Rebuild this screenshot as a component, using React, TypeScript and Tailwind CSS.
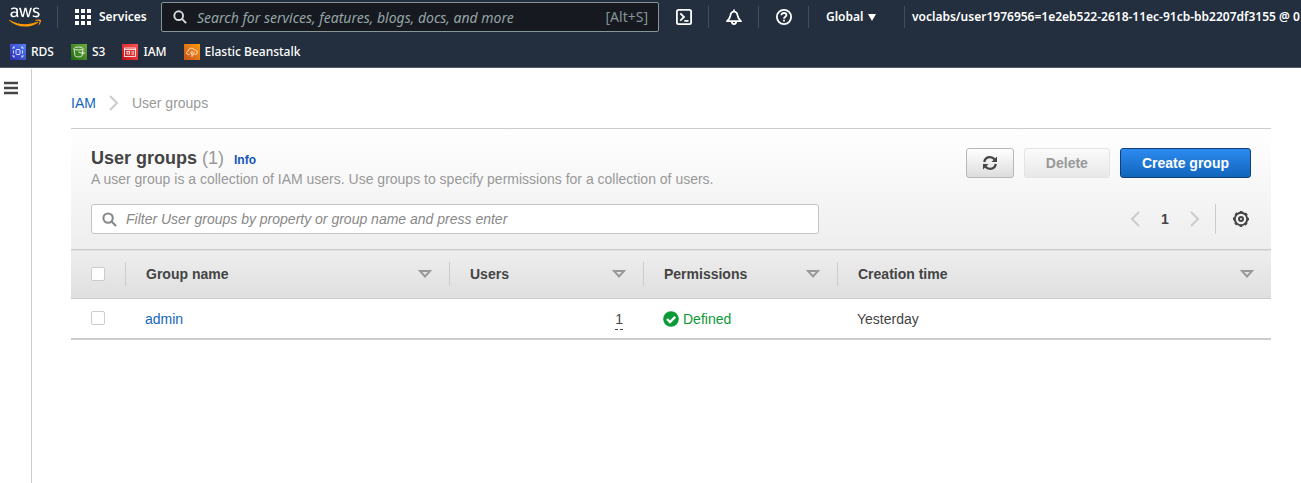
import React from "react";
import { FaAws } from "react-icons/fa";

const focus = "focus-visible:outline-2 focus-visible:outline-[#4d9de0]";

function NavDivider() {
  return <span className="h-[22px] w-px shrink-0 bg-[#414d5c]" />;
}

function AwsLogo() {
  return (
    <a href="#home" aria-label="AWS" className={`ml-[9px] block h-[26px] w-8 shrink-0 ${focus}`}>
      <svg width="0" height="0" className="absolute" aria-hidden="true">
        <defs>
          <linearGradient id="awsFill" x1="0" y1="0" x2="0" y2="1">
            <stop offset="0.63" stopColor="#ffffff" />
            <stop offset="0.63" stopColor="#ff9900" />
          </linearGradient>
        </defs>
      </svg>
      <FaAws fill="url(#awsFill)" className="h-[26px] w-8" />
    </a>
  );
}

function GridIcon() {
  return (
    <svg viewBox="0 0 16 16" className="size-4 shrink-0" fill="currentColor" aria-hidden="true">
      {[0, 6, 12].map((y) => [0, 6, 12].map((x) => <rect key={`${x}-${y}`} x={x} y={y} width="4" height="4" />))}
    </svg>
  );
}

function SearchIcon({ className }: { className: string }) {
  return (
    <svg viewBox="0 0 16 16" className={className} fill="none" stroke="currentColor" strokeWidth="2.200" aria-hidden="true">
      <circle cx="6.5" cy="6.5" r="5" />
      <path d="M10.2 10.2 15 15" />
    </svg>
  );
}

function ShellIcon() {
  return (
    <svg viewBox="0 0 16 16" className="size-4" fill="none" stroke="currentColor" strokeWidth="1.8" aria-hidden="true">
      <rect x="0.9" y="0.9" width="14.2" height="14.2" rx="1.6" />
      <path d="M4.3 4.3 8 8l-3.7 3.7M8.3 11.8h4.2" />
    </svg>
  );
}

function BellIcon() {
  return (
    <svg viewBox="0 0 16 16" className="size-4" fill="none" stroke="currentColor" strokeWidth="1.8" strokeLinejoin="round" aria-hidden="true">
      <path d="M1 12.2h14c-2.6-1.8-3-3.6-3.4-5.700C11.200 4 10 2.600 8 2.600S4.800 4 4.400 6.500C4 8.600 3.600 10.400 1 12.200Z" />
      <path d="M8 .4v2.200M5.800 12.600c.2 1.700 1 2.500 2.200 2.500s2-.8 2.200-2.500" />
    </svg>
  );
}

function HelpIcon() {
  return (
    <svg viewBox="0 0 16 16" className="size-4" fill="none" stroke="currentColor" strokeWidth="1.8" aria-hidden="true">
      <circle cx="8" cy="8" r="7.1" />
      <path d="M5.400 6.300C5.500 4.700 6.500 4 8 4s2.500.9 2.500 2.100C10.500 7.700 8 7.700 8 9.700" />
      <path d="M8 10.700v1.800" />
    </svg>
  );
}

const tileArt = {
  rds: (
    <>
      <path d="M3 5V3h2M11 3h2v2M13 11v2h-2M5 13H3v-2M3 3l2 2M13 3l-2 2M3 13l2-2M13 13l-2-2" strokeDasharray="1.500 1" />
      <rect x="6" y="5.500" width="4" height="5" rx="1" />
      <path d="M3.500 6.500v3M12.500 6.500v3" />
    </>
  ),
  s3: (
    <>
      <ellipse cx="7.500" cy="4.500" rx="4.500" ry="1.500" />
      <path d="m3 4.700 1 7c.2 1.600 6.800 1.600 7 0l1-7M7.500 8l4.500 1.500c2 .6 1.500-1.200-.3-2" />
    </>
  ),
  iam: (
    <>
      <rect x="2.500" y="4" width="11" height="8.500" />
      <path d="M2.500 5.500h11M9.500 8h2.500M9.500 10h2.500" />
      <rect x="5" y="7.500" width="2.500" height="2.500" />
    </>
  ),
  beanstalk: (
    <path d="M5.500 10.500H4.600C2 10.300 2 7.300 4.300 7 4.600 3.500 9.400 3.200 10.300 6c3.300-.3 4.200 4.200.7 4.500h-.5M8 13V7M8 10 6 8.300M8 11.500l2-1.800V8" />
  ),
};

function ServiceTile({ art, label, tile }: { art: keyof typeof tileArt; label: string; tile: string }) {
  return (
    <a href={`#${art}`} className={`flex items-center gap-[5px] ${focus}`}>
      <span className={`size-4 ${tile}`}>
        <svg viewBox="0 0 16 16" className="size-4" fill="none" stroke="#ffffff" strokeWidth="0.8" aria-hidden="true">
          {tileArt[art]}
        </svg>
      </span>
      {label}
    </a>
  );
}

function TopNav() {
  return (
    <header className="overflow-hidden border-b border-[#545b64] bg-[#232f3e] font-['Noto_Sans',sans-serif] text-xs text-white">
      <nav aria-label="Global" className="flex h-[34px] items-center font-semibold">
        <AwsLogo />
        <span className="ml-4 flex"><NavDivider /></span>
        <button type="button" className={`ml-[17px] flex w-[72px] shrink-0 items-center gap-2 ${focus}`}>
          <GridIcon />
          Services
        </button>
        <label className="ml-[14px] flex h-[30px] min-w-40 flex-1 items-center rounded-xs border border-[#879596] bg-[#16191f] px-[10px] text-[#d5dbdb]">
          <span className="sr-only">Search</span>
          <SearchIcon className="mx-px size-[14px] shrink-0" />
          <input
            type="search"
            placeholder="Search for services, features, blogs, docs, and more"
            className="ml-[5px] h-full min-w-0 flex-1 bg-transparent pl-1 text-sm font-normal outline-none placeholder:text-[#95a5a6] placeholder:italic"
          />
          <span className="text-sm font-normal text-[#879596]">[Alt+S]</span>
        </label>
        <button type="button" aria-label="CloudShell" className={`mr-4 ml-[17px] shrink-0 ${focus}`}><ShellIcon /></button>
        <NavDivider />
        <button type="button" aria-label="Notifications" className={`mr-4 ml-[17px] shrink-0 ${focus}`}><BellIcon /></button>
        <NavDivider />
        <button type="button" aria-label="Help" className={`mr-4 ml-[17px] shrink-0 ${focus}`}><HelpIcon /></button>
        <NavDivider />
        <button type="button" className={`flex w-[95px] shrink-0 items-center justify-between pr-7 pl-[17px] ${focus}`}>
          Global
          <svg viewBox="0 0 8 7" className="h-[7px] w-2" fill="currentColor" aria-hidden="true"><path d="M0 0h8L4 7Z" /></svg>
        </button>
        <NavDivider />
        <button type="button" className={`w-[396px] shrink-0 overflow-hidden pl-[7px] text-left whitespace-nowrap ${focus}`}>
          voclabs/user1976956=1e2eb522-2618-11ec-91cb-bb2207df3155 @ 0
        </button>
      </nav>
      <nav aria-label="Favorites" className="flex h-[33px] items-center gap-[17px] pt-[2px] pl-[10px] font-medium">
        <ServiceTile art="rds" label="RDS" tile="bg-linear-45 from-[#2e27ad] to-[#527fff]" />
        <ServiceTile art="s3" label="S3" tile="bg-linear-45 from-[#1b660f] to-[#6cae3e]" />
        <ServiceTile art="iam" label="IAM" tile="bg-linear-45 from-[#bd0816] to-[#ff5252]" />
        <ServiceTile art="beanstalk" label="Elastic Beanstalk" tile="bg-linear-45 from-[#c8511b] to-[#ff9900]" />
      </nav>
    </header>
  );
}

function Chevron({ flip = false }: { flip?: boolean }) {
  return (
    <svg viewBox="0 0 10 16" className="h-4 w-[10px]" fill="none" stroke="#cccccc" strokeWidth="2" aria-hidden="true">
      <path d={flip ? "M9 1 2 8l7 7" : "m1 1 7 7-7 7"} />
    </svg>
  );
}

function RefreshIcon() {
  return (
    <svg viewBox="0 0 16 16" className="size-4" fill="none" stroke="#444444" strokeWidth="2.300" aria-hidden="true">
      <path d="M2.200 7C2.800 4 5.200 2.200 8 2.200c2 0 3.500.8 4.700 2.300M13.800 9c-.6 3-3 4.800-5.800 4.800-2 0-3.500-.8-4.700-2.300" />
      <path d="M15 1.500v5.500H9.500ZM1 14.500V9h5.500Z" fill="#444444" stroke="none" />
    </svg>
  );
}

function GearIcon() {
  return (
    <svg viewBox="0 0 16 16" className="size-4" fill="none" stroke="#444444" aria-hidden="true">
      <circle cx="8" cy="8" r="6.200" strokeWidth="2" />
      <circle cx="8" cy="8" r="7.400" strokeWidth="1.200" strokeDasharray="2.906 2.906" strokeDashoffset="1.453" />
      <circle cx="8" cy="8" r="2" strokeWidth="2" />
    </svg>
  );
}

function Checkbox({ label }: { label: string }) {
  return (
    <input
      type="checkbox"
      aria-label={label}
      className="block size-[14px] appearance-none rounded-xs border border-[#cccccc] bg-white checked:bg-[#1166bb]"
    />
  );
}

function HeaderCell({ label, last = false }: { label: string; last?: boolean }) {
  return (
    <th scope="col" className="p-0 text-left font-bold">
      <button
        type="button"
        className={`flex h-6 w-full items-center justify-between border-[#cccccc] pr-[17px] pl-5 ${last ? "" : "border-r"} ${focus}`}
      >
        {label}
        <svg viewBox="0 0 14 8" className="h-2 w-[14px]" fill="none" stroke="#999999" strokeWidth="2" aria-hidden="true">
          <path d="M2 1h10L7 6.500Z" />
        </svg>
      </button>
    </th>
  );
}

function GroupsTable() {
  return (
    <table className="w-full table-fixed border-b-2 border-[#cccccc]">
      <colgroup>
        <col className="w-[55px]" />
        <col className="w-[324px]" />
        <col className="w-[194px]" />
        <col className="w-[194px]" />
        <col />
      </colgroup>
      <thead>
        <tr className="h-[49px] border-y border-[#cccccc] bg-linear-to-b from-[#eeeeee] to-[#dfdfdf]">
          <th scope="col" className="p-0">
            <div className="flex h-6 items-center border-r border-[#cccccc] pl-5">
              <Checkbox label="Select all groups" />
            </div>
          </th>
          <HeaderCell label="Group name" />
          <HeaderCell label="Users" />
          <HeaderCell label="Permissions" />
          <HeaderCell label="Creation time" last />
        </tr>
      </thead>
      <tbody>
        <tr className="h-10">
          <td className="p-0 pl-5"><Checkbox label="Select admin" /></td>
          <td className="p-0 pt-[2px] pl-[19px]"><a href="#admin" className="text-[#1166bb]">admin</a></td>
          <td className="p-0 pt-[2px] pr-[21px] text-right">
            <button type="button" className={`border-b border-dashed border-[#444444] ${focus}`}>1</button>
          </td>
          <td className="p-0 pt-[2px] pl-[19px]">
            <span className="flex items-center gap-1 text-[#0b9a35]">
              <svg viewBox="0 0 16 16" className="size-4" aria-hidden="true">
                <circle cx="8" cy="8" r="7.800" fill="#0b9a35" />
                <path d="m4 8 3 3 5.200-5.200" fill="none" stroke="#ffffff" strokeWidth="2.400" />
              </svg>
              Defined
            </span>
          </td>
          <td className="p-0 pt-[2px] pl-[19px]">Yesterday</td>
        </tr>
      </tbody>
    </table>
  );
}

export default function App() {
  return (
    <div className="flex min-h-screen flex-col bg-white font-['Liberation_Sans',Arial,sans-serif] text-sm text-[#444444]">
      <TopNav />
      <div className="flex flex-1 pt-px">
        <aside className="w-8 shrink-0 border-r border-[#cccccc] pt-3 pl-1">
          <button type="button" aria-label="Open navigation" className={`block ${focus}`}>
            <svg viewBox="0 0 14 14" className="size-[14px]" fill="#444444" aria-hidden="true">
              <path d="M0 .8h14v2.400H0zM0 5.800h14v2.400H0zM0 10.800h14v2.400H0z" />
            </svg>
          </button>
        </aside>
        <main className="min-w-0 flex-1 pt-6 pr-[30px] pl-[39px]">
          <nav aria-label="Breadcrumb" className="flex h-5 items-center gap-[13px]">
            <a href="#iam" className="text-[#1166bb]">IAM</a>
            <Chevron />
            <span className="text-[#999999]">User groups</span>
          </nav>
          <section className="mt-[15px] border-t border-[#cccccc]">
            <div className="bg-linear-to-b from-white to-[#eeeeee] px-5 pt-[19px] pb-[15px]">
              <div className="flex items-start gap-4">
                <div className="min-w-0 flex-1">
                  <h1 className="flex items-baseline text-lg leading-5 font-bold">
                    User groups
                    <span className="ml-[5px] font-normal text-[#999999]">(1)</span>
                    <a href="#info" className="ml-[10px] text-xs text-[#1155bb]">Info</a>
                  </h1>
                  <p className="mt-px leading-5 text-[#999999]">
                    A user group is a collection of IAM users. Use groups to specify permissions for a collection of users.
                  </p>
                </div>
                <div className="flex gap-[10px] font-bold">
                  <button type="button" aria-label="Refresh" className={`flex h-[30px] w-12 items-center justify-center rounded-[3px] border border-[#b8b8b8] bg-linear-to-b from-white to-[#dddddd] ${focus}`}>
                    <RefreshIcon />
                  </button>
                  <button type="button" disabled className="h-[30px] rounded-[3px] border border-[#e4e4e4] bg-linear-to-b from-[#fbfbfb] to-[#e8e8e8] px-[21px] text-[#999999]">
                    Delete
                  </button>
                  <button type="button" className={`h-[30px] rounded-[3px] border border-[#0f407a] bg-linear-to-b from-[#2c8af0] to-[#1166bb] px-[21px] text-white ${focus}`}>
                    Create group
                  </button>
                </div>
              </div>
              <div className="mt-[15px] flex items-center justify-between gap-4">
                <label className="flex h-[30px] max-w-[728px] flex-1 items-center rounded-[3px] border border-[#c4c4c4] bg-white pl-[10px] text-[#888888]">
                  <span className="sr-only">Filter User groups</span>
                  <SearchIcon className="size-[15px] shrink-0" />
                  <input
                    type="search"
                    placeholder="Filter User groups by property or group name and press enter"
                    className="ml-[5px] h-full min-w-0 flex-1 bg-transparent pl-1 outline-none placeholder:text-[#888888] placeholder:italic"
                  />
                </label>
                <div className="flex items-center">
                  <button type="button" aria-label="Previous page" className={focus}><Chevron flip /></button>
                  <span className="w-[50px] text-center font-bold">1</span>
                  <button type="button" aria-label="Next page" className={focus}><Chevron /></button>
                  <span className="mr-[17px] ml-[15px] h-[30px] w-px bg-[#cccccc]" />
                  <button type="button" aria-label="Preferences" className={`mr-[2px] ${focus}`}><GearIcon /></button>
                </div>
              </div>
            </div>
            <GroupsTable />
          </section>
        </main>
      </div>
    </div>
  );
}
